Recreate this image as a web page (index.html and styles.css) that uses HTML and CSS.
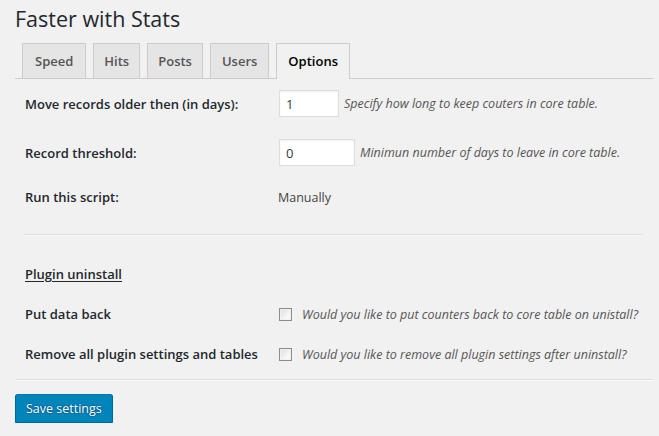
FILE: index.html
```html
<!DOCTYPE html>
<html>
<head>
<meta charset="utf-8">
<link rel="stylesheet" href="styles.css">
</head>
<body>
<div class="wrap">
  <h1 class="title">Faster with Stats</h1>
  <nav class="tabs">
    <a class="tab tab-first">Speed</a>
    <a class="tab">Hits</a>
    <a class="tab">Posts</a>
    <a class="tab tab-wide">Users</a>
    <a class="tab tab-active">Options</a>
  </nav>
  <form class="form">
    <div class="row row-field">
      <label class="label">Move records older then (in days):</label>
      <div class="field"><input class="num num-short" type="text" value="1"><span class="desc">Specify how long to keep couters in core table.</span></div>
    </div>
    <div class="row row-field">
      <label class="label">Record threshold:</label>
      <div class="field"><input class="num num-long" type="text" value="0"><span class="desc">Minimun number of days to leave in core table.</span></div>
    </div>
    <div class="row row-text">
      <label class="label">Run this script:</label>
      <div class="field"><span class="value">Manually</span></div>
    </div>
    <hr class="sep sep-inner">
    <div class="row row-check row-section">
      <span class="label section">Plugin uninstall</span>
    </div>
    <div class="row row-check">
      <label class="label">Put data back</label>
      <div class="field"><input class="check" type="checkbox"><span class="desc desc-check">Would you like to put counters back to core table on unistall?</span></div>
    </div>
    <div class="row row-check">
      <label class="label">Remove all plugin settings and tables</label>
      <div class="field"><input class="check" type="checkbox"><span class="desc desc-check">Would you like to remove all plugin settings after uninstall?</span></div>
    </div>
    <hr class="sep sep-outer">
    <button class="btn" type="button">Save settings</button>
  </form>
</div>
</body>
</html>
```

FILE: styles.css
```css
html, body {
  margin: 0;
  padding: 0;
  background: #f1f1f1;
}
body {
  font-family: "Open Sans", "Noto Sans", sans-serif;
  color: #23282d;
  font-size: 13px;
}
.wrap {
  padding: 4px 6px 0 15px;
}
.title {
  margin: 0;
  font-size: 21.5px;
  font-weight: 400;
  line-height: 29px;
  color: #23282d;
}
.tabs {
  display: flex;
  gap: 7px;
  margin-top: 10px;
  padding-left: 7px;
  border-bottom: 1px solid #ccc;
  height: 35px;
}
.tab {
  display: block;
  box-sizing: border-box;
  height: 35px;
  padding: 5px 10px;
  line-height: 24px;
  font-size: 13px;
  font-weight: 600;
  color: #555;
  background: #e5e5e5;
  border: 1px solid #ccc;
  border-bottom: none;
}
.tab-first {
  padding: 5px 12px;
}
.tab-wide {
  padding: 5px 11px;
}
.tab-active {
  background: #f1f1f1;
  color: #000;
  height: 36px;
  padding: 5px 11px 6px;
}
.row {
  display: grid;
  grid-template-columns: 254px 1fr;
  align-items: center;
  padding-left: 10px;
}
.row-field {
  padding-top: 11px;
  padding-bottom: 11px;
}
.row-text {
  padding-top: 10px;
  height: 20px;
  padding-bottom: 27px;
}
.row-check {
  height: 40px;
}
.row-section {
  margin-top: 18px;
}
.label {
  font-weight: 600;
  font-size: 13px;
  color: #23282d;
}
.section {
  text-decoration: underline;
  text-underline-offset: 2px;
}
.field {
  display: flex;
  align-items: center;
}
.num {
  box-sizing: border-box;
  height: 27px;
  margin: 0;
  padding: 2px 6px;
  font-family: inherit;
  font-size: 13px;
  color: #32373c;
  background: #fff;
  border: 1px solid #ddd;
  box-shadow: inset 0 1px 2px rgba(0,0,0,.07);
  outline: none;
}
.num-short { width: 60px; }
.num-long { width: 76px; }
.desc {
  margin-left: 5px;
  font-style: italic;
  font-size: 12.5px;
  color: #555;
}
.desc-check {
  margin-left: 10px;
}
.value {
  font-size: 12.5px;
  color: #444;
  margin-left: -1px;
}
.check {
  appearance: none;
  -webkit-appearance: none;
  box-sizing: border-box;
  width: 13px;
  height: 13px;
  margin: 0;
  border: 1px solid #8c8c8c;
  background: linear-gradient(135deg, #dcdcdc 0%, #f4f4f4 60%, #fff 100%);
  box-shadow: inset 0 0 0 1px #f0f0f0;
}
.sep {
  height: 0;
  border: 0;
  border-top: 1px solid #ddd;
  border-bottom: 1px solid #fafafa;
  margin: 0;
}
.sep-inner {
  margin: 0 10px;
}
.sep-outer {
  margin-top: 5px;
}
.btn {
  margin-top: 13px;
  box-sizing: border-box;
  height: 29px;
  padding: 0 10px;
  font-family: inherit;
  font-size: 12.5px;
  color: #fff;
  background: #0085ba;
  border: 1px solid #0073aa;
  border-color: #0073aa #006799 #006799;
  border-radius: 3px;
  box-shadow: 0 1px 0 #006799;
  text-shadow: 0 -1px 1px #006799, 1px 0 1px #006799, 0 1px 1px #006799, -1px 0 1px #006799;
}
```
